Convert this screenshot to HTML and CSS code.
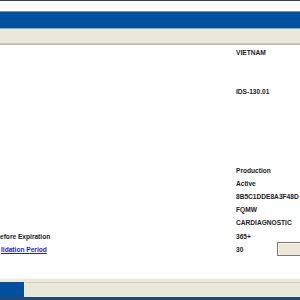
FILE: index.html
```html
<!DOCTYPE html>
<html>
<head>
<meta charset="utf-8">
<link rel="stylesheet" href="styles.css">
</head>
<body>
<div class="page">
  <header class="head">
    <div class="topline"></div>
    <div class="gap"></div>
    <div class="titlebar"></div>
    <div class="toolbar"></div>
  </header>
  <main class="info">
    <div class="row"><span class="label"></span><span class="value">VIETNAM</span></div>
    <div class="row spacer2"><span class="label"></span><span class="value">IDS-130.01</span></div>
    <div class="row spacer5"><span class="label"></span><span class="value">Production</span></div>
    <div class="row"><span class="label"></span><span class="value">Active</span></div>
    <div class="row"><span class="label"></span><span class="value">8B5C1DDE8A3F48D</span></div>
    <div class="row"><span class="label"></span><span class="value">FQMW</span></div>
    <div class="row"><span class="label"></span><span class="value">CARDIAGNOSTIC</span></div>
    <div class="row"><span class="label">efore Expiration</span><span class="value">365+</span></div>
    <div class="row"><a class="label link" href="#">lidation Period</a><span class="value">30</span><button class="btn" type="button"></button></div>
  </main>
  <footer class="taskbar">
    <div class="bar">
      <div class="start"></div>
      <div class="tray"></div>
    </div>
    <div class="bottomline"></div>
  </footer>
</div>
</body>
</html>
```

FILE: styles.css
```css
html, body {
  margin: 0;
  padding: 0;
  background: #ffffff;
}
body {
  overflow: hidden;
  font-family: "Liberation Sans", Arial, sans-serif;
}
.page {
  width: 300px;
  height: 300px;
  display: flex;
  flex-direction: column;
  overflow: hidden;
}
.topline {
  height: 1px;
  background: #3c3f3e;
}
.gap {
  height: 10px;
  background: #ffffff;
}
.titlebar {
  height: 16px;
  background: #00509e;
  border-top: 1px solid #6f93c2;
  border-bottom: 1px solid #8fa9c9;
}
.toolbar {
  height: 14px;
  background: #ebe8da;
  border-bottom: 2px solid #c3c0b4;
}
.info {
  flex: 1;
  padding-top: 0.5px;
}
.row {
  display: grid;
  grid-template-columns: 236px 41px 1fr;
  align-items: center;
  height: 13.15px;
  line-height: 13.15px;
  font-size: 6.6px;
  font-weight: bold;
  color: #222222;
  white-space: nowrap;
}
.spacer2 { margin-top: 26.3px; }
.spacer5 { margin-top: 65.75px; }
.label {
  padding-left: 0;
  overflow: hidden;
}
.link {
  color: #1f1fcf;
  text-decoration: underline;
  padding-left: 1px;
}
.value {
  overflow: visible;
}
.btn {
  height: 14px;
  margin: 0;
  padding: 0;
  width: 40px;
  background: #ece9d8;
  border: 1px solid #7a7a72;
  box-shadow: inset 1px 1px 0 #f8f7f0;
  align-self: center;
  position: relative;
  top: -1px;
}
.taskbar {
  display: flex;
  flex-direction: column;
}
.bar {
  height: 18px;
  background: #ece9d8;
  border-top: 1px solid #faf9f4;
  display: flex;
  align-items: flex-end;
}
.start {
  width: 24px;
  height: 15px;
  background: #0050a0;
  border-right: 1px solid #e8eef6;
}
.tray {
  flex: 1;
  height: 14px;
  border-top: 1px solid #d4d0c0;
  background: #ebe8d9;
}
.bottomline {
  height: 3px;
  background: #23497a;
}
```
